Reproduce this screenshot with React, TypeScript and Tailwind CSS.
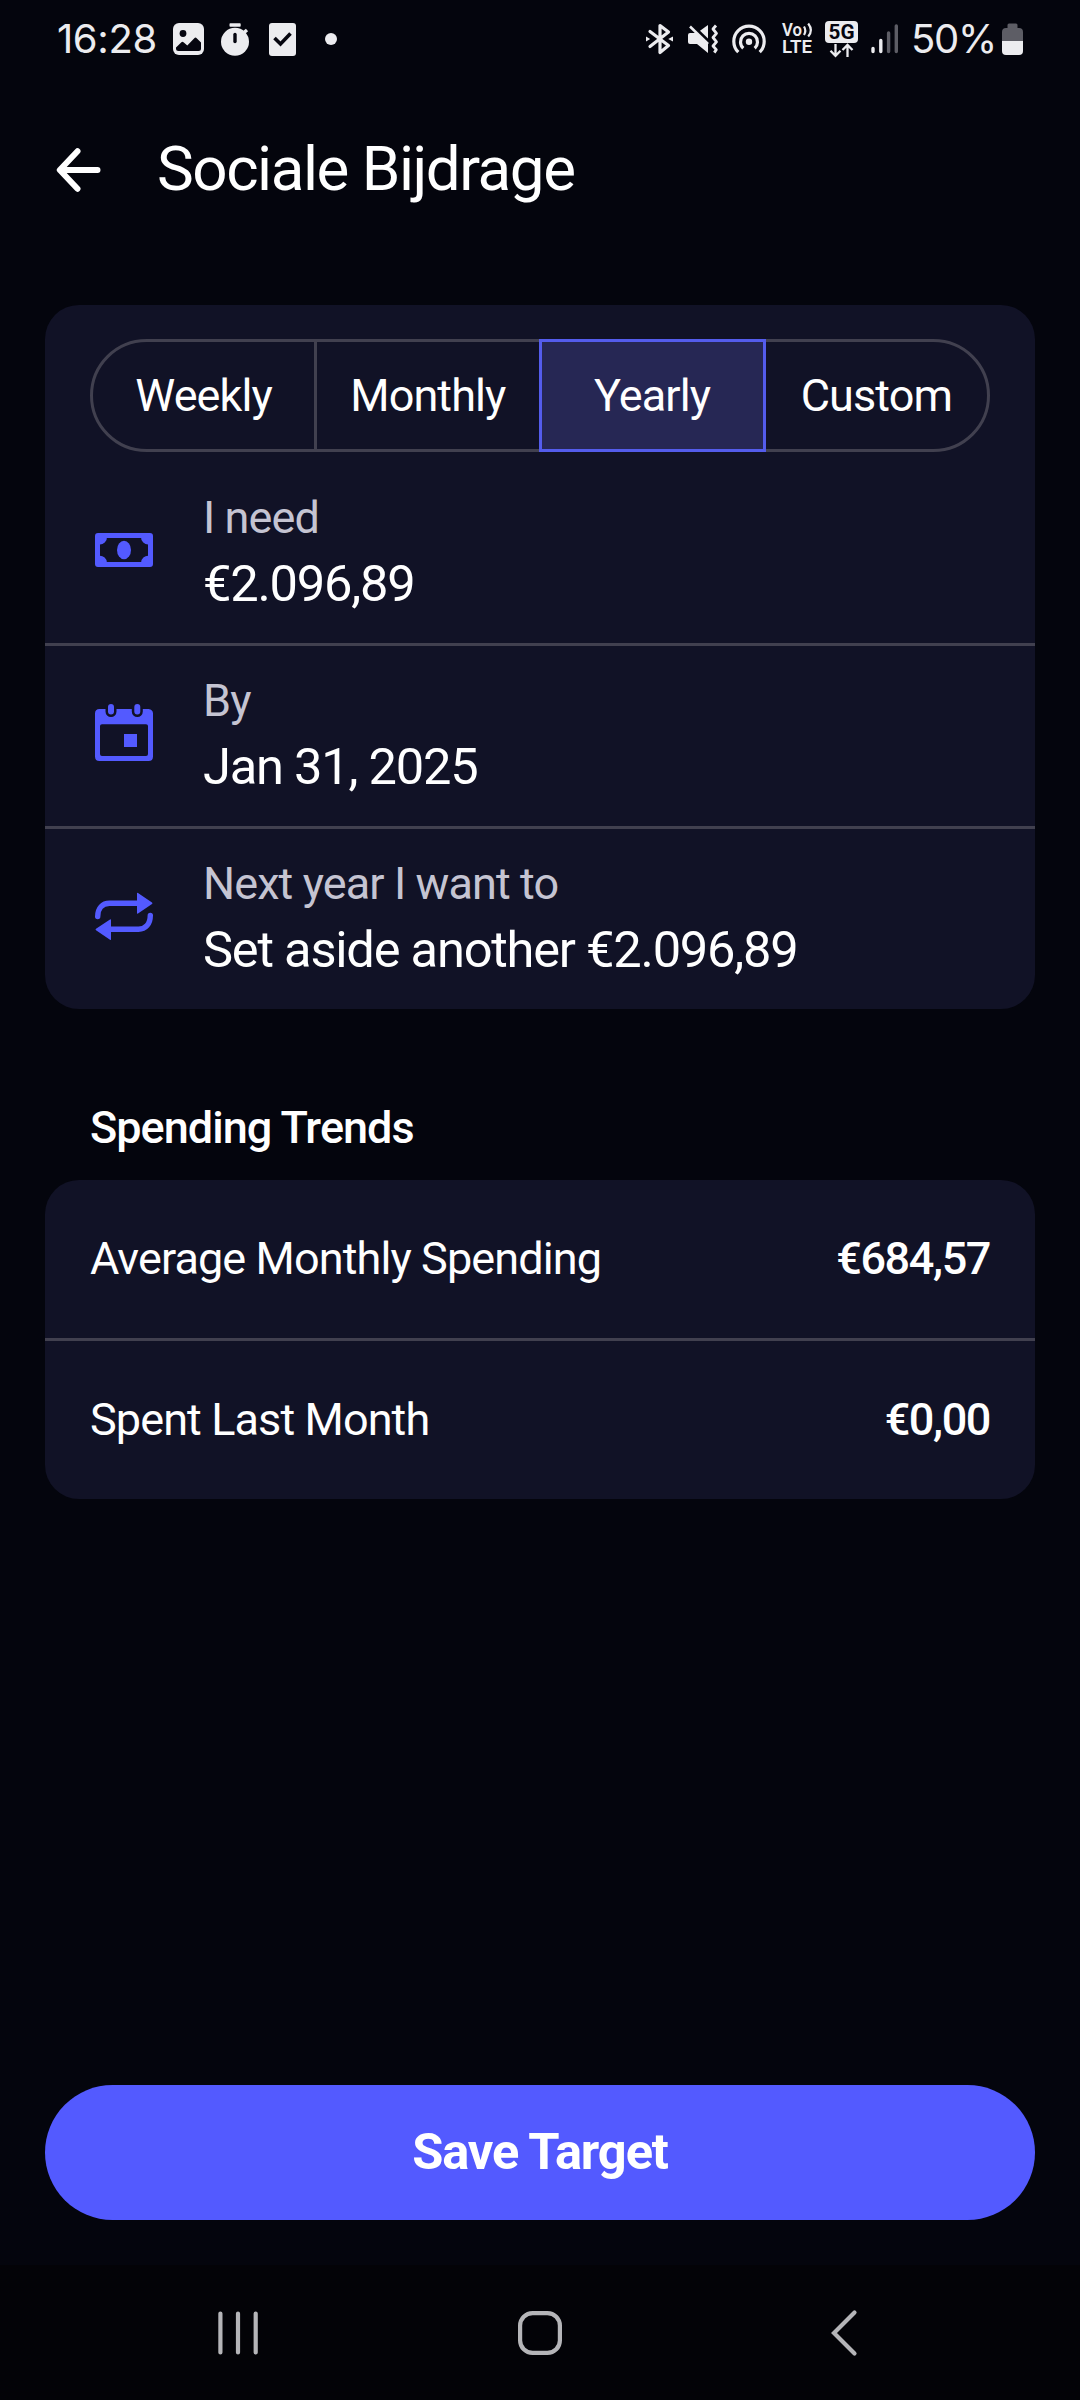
import React from "react";

function PictureIcon() {
  return (
    <svg className="h-[32px] w-[31px] shrink-0" viewBox="0 0 31 32">
      <rect x="0" y="0" width="31" height="32" rx="6" fill="#ececef" />
      <circle cx="10" cy="10.5" r="3.4" fill="#05050f" />
      <path d="M3 24.5 8.4 19.3Q9.4 18.3 10.5 19.2L14.3 22.4 21.3 15.2Q22.5 14 23.7 15.2L28 19.6V25.5Q28 28 25.5 28H5.5Q3 28 3 25.5Z" fill="#05050f" />
    </svg>
  );
}

function StopwatchIcon() {
  return (
    <svg className="h-[33px] w-[28px] shrink-0" viewBox="0 0 28 33">
      <rect x="8.5" y="0.3" width="11.2" height="3.4" rx="0.8" fill="#ececef" />
      <circle cx="14" cy="18.8" r="14" fill="#ececef" />
      <path d="M22.8 9.6 26 7" stroke="#ececef" strokeWidth="3.4" />
      <path d="M14 11.5v7" stroke="#05050f" strokeWidth="3.4" strokeLinecap="round" />
    </svg>
  );
}

function CheckedDocIcon() {
  return (
    <svg className="h-[33px] w-[27px] shrink-0" viewBox="0 0 27 33">
      <rect width="27" height="33" rx="3" fill="#ececef" />
      <path d="M5.5 15 11.5 21 21.5 10.5" fill="none" stroke="#05050f" strokeWidth="3.6" />
    </svg>
  );
}

function BluetoothIcon() {
  return (
    <svg className="h-[32px] w-[27px] shrink-0" viewBox="0 0 27 32">
      <path d="M4 8.5 22.5 22.5 14 29.5V2.5L22.5 9 4 23.5" fill="none" stroke="#ececef" strokeWidth="3.2" strokeLinejoin="round" strokeLinecap="round" />
      <path d="M0 13.4 4.2 16 0 18.6ZM27 13.4 22.2 16 27 18.6Z" fill="#ececef" />
    </svg>
  );
}

function MutedIcon() {
  return (
    <svg className="h-[32px] w-[31px] shrink-0" viewBox="0 0 31 32">
      <path d="M0 12Q0 10 2 10H8L20 21V30L9 21H2Q0 21 0 19Z" fill="#ececef" />
      <path d="M12 7.8 20 2V15.5Z" fill="#ececef" />
      <path d="M2 3.5 20 21" stroke="#ececef" strokeWidth="2.6" />
      <path d="M28 2.5 25 6l3.500 4.300L25 14.500l3.500 4.300L25 23l3.300 3.600-2 3" fill="none" stroke="#ececef" strokeWidth="2.8" strokeLinejoin="round" />
    </svg>
  );
}

function HotspotIcon() {
  return (
    <svg className="h-[32px] w-[34px] shrink-0" viewBox="0 0 34 32">
      <circle cx="17" cy="18.7" r="3.2" fill="#ececef" />
      <path d="M6.3 29.2A15.2 15.2 0 1 1 27.7 29.2" fill="none" stroke="#ececef" strokeWidth="3.2" />
      <path d="M11.3 25.2A8.5 8.5 0 1 1 22.7 25.2" fill="none" stroke="#ececef" strokeWidth="3.2" />
    </svg>
  );
}

function VolteIcon() {
  return (
    <svg className="h-[46px] w-[32px] shrink-0 overflow-visible" viewBox="0 -6 32 46" fill="#ececef" fontFamily="Roboto, sans-serif" fontWeight="600">
      <text x="0" y="13.500" fontSize="18" textLength="20" lengthAdjust="spacingAndGlyphs">Vo</text>
      <path d="M22 4.500Q24.600 8.700 22 13M26.200 1.500Q31.600 8.500 26.200 14.500" fill="none" stroke="#ececef" strokeWidth="2.2" />
      <text x="0" y="31" fontSize="19" textLength="30" lengthAdjust="spacingAndGlyphs">LTE</text>
    </svg>
  );
}

function FiveGIcon() {
  return (
    <svg className="h-[37px] w-[33px] shrink-0" viewBox="0 0 33 37">
      <rect width="33" height="22" rx="4" fill="#ececef" />
      <text x="3.5" y="17.8" fill="#05050f" fontFamily="Roboto, sans-serif" fontWeight="700" fontSize="20" textLength="26" lengthAdjust="spacingAndGlyphs">5G</text>
      <path d="M10.5 23V34.5M5.5 29.8 10.5 34.8 15.5 29.8M22.5 36V24.5M17.5 29 22.5 24 27.5 29" fill="none" stroke="#ececef" strokeWidth="2.3" />
    </svg>
  );
}

function SignalIcon() {
  return (
    <svg className="h-[30px] w-[28px] shrink-0" viewBox="0 0 28 30" strokeWidth="3.4" strokeLinecap="round">
      <path d="M2 24.5V27.5M9.8 16.5V27.5" stroke="#ececef" />
      <path d="M17.6 9V27.5M25.3 2V27.5" stroke="#5d5d65" />
    </svg>
  );
}

function BatteryIcon() {
  return (
    <svg className="h-[32px] w-[21px] shrink-0" viewBox="0 0 21 32">
      <path d="M5.5 5V2Q5.5 0.5 7 0.5H14Q15.5 0.5 15.5 2V5H17Q21 5 21 9V18H0V9Q0 5 4 5Z" fill="#5d5d65" />
      <path d="M0 18H21V28Q21 32 17 32H4Q0 32 0 28Z" fill="#ececef" />
    </svg>
  );
}

function MoneyIcon() {
  return (
    <svg className="h-[34px] w-[58px]" viewBox="0 0 58 34">
      <rect x="2.5" y="2.5" width="53" height="29" rx="0.5" fill="none" stroke="#535aff" strokeWidth="5" strokeLinejoin="round" />
      <path d="M4 4H12A7.2 7.2 0 0 1 4 11.5ZM54 4V11.5A7.2 7.2 0 0 1 46 4ZM4 30V22.8A7.2 7.2 0 0 1 12 30ZM54 30H46A7.2 7.2 0 0 1 54 22.8Z" fill="#535aff" />
      <ellipse cx="29" cy="17" rx="7" ry="9.2" fill="#535aff" />
    </svg>
  );
}

function CalendarIcon() {
  return (
    <svg className="h-[58px] w-[58px]" viewBox="0 0 58 58">
      <path fillRule="evenodd" d="M4.500 5H53.500Q58 5.500 58 9.500V52.500Q58 57 53.500 57H4.500Q0 57 0 52.500V9.500Q0 5 4.500 5ZM7 20.200Q5 20.200 5 22V50Q5 52 7 52H51Q53 52 53 50V22Q53 20.200 51 20.200Z" fill="#535aff" />
      <path d="M16 3V7.500M42.300 3V7.500" stroke="#111226" strokeWidth="11" strokeLinecap="round" />
      <path d="M16 3V7.500M42.300 3V7.500" stroke="#535aff" strokeWidth="6" strokeLinecap="round" />
      <rect x="29" y="30" width="13" height="13" fill="#535aff" />
    </svg>
  );
}

function RepeatIcon() {
  return (
    <svg className="mt-[2px] h-[50px] w-[58px]" viewBox="0 0 58 50">
      <path d="M2.700 24.500C2.700 16 7.500 11.300 14.500 11.300H43M55.300 23.500C55.300 32 50.500 37.300 43.500 37.300H15" fill="none" stroke="#535aff" strokeWidth="5.400" strokeLinecap="round" />
      <path d="M42 1.500Q42 0.300 43 1L57 10.500Q58 11.300 57 12.100L43 21.500Q42 22.200 42 21ZM16 28Q16 26.800 15 27.500L1 36.800Q0 37.500 1 38.300L15 47.800Q16 48.500 16 47.300Z" fill="#535aff" />
    </svg>
  );
}

function StatusBar() {
  return (
    <header className="flex h-[78px] shrink-0 items-center justify-between pl-[57px] pr-[57px] text-[#ececef]">
      <div className="flex items-center">
        <span className="w-[116px] whitespace-nowrap font-[Inter,sans-serif] text-[40px] leading-none tracking-[-0.400px]">16:28</span>
        <PictureIcon />
        <span className="w-[17px]" />
        <StopwatchIcon />
        <span className="w-[20px]" />
        <CheckedDocIcon />
        <span className="ml-[29px] size-3 rounded-full bg-[#ececef]" />
      </div>
      <div className="flex items-center">
        <BluetoothIcon />
        <span className="w-[15px]" />
        <MutedIcon />
        <span className="w-[13px]" />
        <HotspotIcon />
        <span className="w-[16px]" />
        <VolteIcon />
        <span className="w-[11px]" />
        <FiveGIcon />
        <span className="w-[13px]" />
        <SignalIcon />
        <span className="ml-[12px] w-[91px] whitespace-nowrap font-[Inter,sans-serif] text-[40px] leading-none tracking-[-1.300px]">50%</span>
        <BatteryIcon />
      </div>
    </header>
  );
}

function Periods() {
  return (
    <div className="mx-[45px] flex h-[113px] text-center text-[45px] leading-[107px] tracking-[-0.900px] text-white">
      <div className="flex-1 rounded-l-full border-[3px] border-[#41404f]">Weekly</div>
      <div className="-ml-[3px] flex-1 border-[3px] border-[#41404f]">Monthly</div>
      <div className="relative -ml-[3px] flex-1 border-[3px] border-[#545cec] bg-[#262754]">Yearly</div>
      <div className="-ml-[3px] flex-1 rounded-r-full border-[3px] border-[#41404f]">Custom</div>
    </div>
  );
}

function TargetRow({ icon, label, value }: { icon: React.ReactNode; label: string; value: string }) {
  return (
    <div className="flex h-[180px] pl-[50px]">
      <div className="flex h-[174px] w-[108px] items-center">{icon}</div>
      <div className="pt-[24px]">
        <div className="text-[45px] leading-[61px] tracking-[-0.900px] text-[#c5c4d2]">{label}</div>
        <div className="mt-[2px] text-[50.600px] leading-[67px] tracking-[-1.220px] text-white">{value}</div>
      </div>
    </div>
  );
}

function TrendRow({ label, value }: { label: string; value: string }) {
  return (
    <div className="flex h-[158px] items-center justify-between px-[45px] text-[45px] leading-[60px] tracking-[-0.900px] text-white">
      <span>{label}</span>
      <span className="font-medium tracking-[-1.400px]">{value}</span>
    </div>
  );
}

export default function App() {
  return (
    <div className="flex h-[2400px] w-[1080px] flex-col overflow-hidden bg-[#04050d] font-[Roboto,sans-serif]">
      <StatusBar />
      <div className="flex h-[183px] shrink-0 items-center pl-[56px]">
        <svg className="h-[46px] w-[46px]" viewBox="0 0 46 46" fill="none" stroke="#fff" strokeWidth="6" strokeLinecap="round" strokeLinejoin="round">
          <path d="M21.500 4.300 3.800 23 21.500 41.700M4 23H41.500" />
        </svg>
        <h1 className="-mt-px ml-[55px] text-[61.900px] leading-[80px] tracking-[-1.450px] text-white">Sociale Bijdrage</h1>
      </div>

      <section className="mx-[45px] mt-[44px] h-[704px] shrink-0 rounded-[34px] bg-[#111226] pt-[34px]">
        <Periods />
        <div className="mt-[11px]">
          <TargetRow icon={<MoneyIcon />} label="I need" value="€2.096,89" />
          <div className="h-[3px] bg-[#41404f]" />
          <TargetRow icon={<CalendarIcon />} label="By" value="Jan 31, 2025" />
          <div className="h-[3px] bg-[#41404f]" />
          <TargetRow icon={<RepeatIcon />} label="Next year I want to" value="Set aside another €2.096,89" />
        </div>
      </section>

      <h2 className="ml-[90px] mt-[88px] h-[83px] shrink-0 text-[45px] font-medium leading-[61px] tracking-[-0.970px] text-white">Spending Trends</h2>
      <section className="mx-[45px] h-[319px] shrink-0 rounded-[34px] bg-[#111226]">
        <TrendRow label="Average Monthly Spending" value="€684,57" />
        <div className="h-[3px] bg-[#41404f]" />
        <TrendRow label="Spent Last Month" value="€0,00" />
      </section>

      <button className="mx-[45px] mt-auto h-[135px] shrink-0 rounded-full bg-[#535aff] pb-[2px] text-[50.600px] font-bold leading-[133px] tracking-[-1.100px] text-white">
        Save Target
      </button>

      <nav className="mt-[45px] flex h-[135px] shrink-0 items-center bg-[#030307] pl-[217px]">
        <svg className="h-[46px] w-[42px]" viewBox="0 0 42 46" stroke="#b5b5b8" strokeWidth="4.200" strokeLinecap="round">
          <path d="M3.400 3.500V42.500M21 3.500V42.500M38.700 3.500V42.500" />
        </svg>
        <svg className="ml-[258px] h-[46px] w-[46px]" viewBox="0 0 46 46" fill="none" stroke="#b5b5b8" strokeWidth="4.200">
          <rect x="3.100" y="3.100" width="39.800" height="39.800" rx="12.500" />
        </svg>
        <svg className="ml-[267px] h-[48px] w-[28px]" viewBox="0 0 28 48" fill="none" stroke="#b5b5b8" strokeWidth="4.200" strokeLinecap="round">
          <path d="M24.500 3.500 4 24 24.500 44.500" />
        </svg>
      </nav>
    </div>
  );
}
